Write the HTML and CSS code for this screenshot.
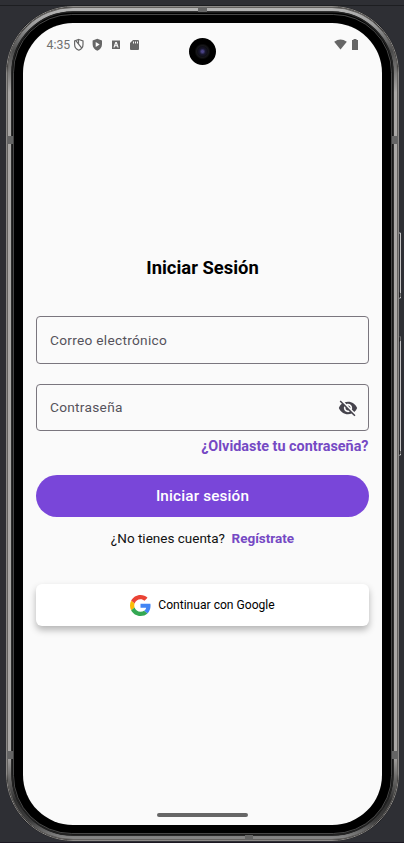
FILE: index.html
```
<!DOCTYPE html>
<html lang="es">
<head>
<meta charset="utf-8">
<title>Iniciar Sesión</title>
<link rel="stylesheet" href="styles.css">
</head>
<body>
<div class="device">
  <svg class="frame" width="404" height="843" viewBox="0 0 404 843" fill="none">
    <defs>
      <linearGradient id="metal" x1="0" y1="0" x2="0" y2="1">
        <stop offset="0" stop-color="#b4b4b4"/><stop offset=".018" stop-color="#9c9c9c"/>
        <stop offset=".05" stop-color="#4a4a4a"/><stop offset=".1" stop-color="#aaa8a6"/>
        <stop offset=".9" stop-color="#aaa8a6"/><stop offset=".955" stop-color="#303030"/><stop offset=".98" stop-color="#3c3c3c"/><stop offset="1" stop-color="#858585"/>
      </linearGradient>
    </defs>
    <path d="M0 5.500H404" stroke="#1d1e21"/>
    <path d="M0 842.500H404" stroke="#1c1822"/>
    <path d="M399 233H400.500V298H399M399 337H400.500V455H399" stroke="#c4c4c4"/>
    <path d="M398.500 293H400V297H398.500M398.500 337H400V341H398.500M398.500 451H400V454H398.500" stroke="#151515"/>
    <rect x="6" y="6" width="393" height="835" rx="67" fill="#000"/>
    <rect x="6.500" y="6.500" width="392" height="834" rx="66.500" stroke="#8b8987"/>
    <rect x="9.500" y="9.500" width="386" height="828" rx="63.500" stroke="url(#metal)" stroke-width="4"/>
    <rect x="7.500" y="7.500" width="390" height="832" rx="65.500" stroke="#63615f"/>
    <rect x="12" y="12" width="381" height="823" rx="61" stroke="#222" stroke-width="1.500"/>
    <rect x="13.500" y="14.500" width="378" height="819" rx="58" stroke="#777" stroke-width=".6"/>
    <path d="M7 136H13V144H7M392 136H398V144H392M7 751H13V759H7M392 751H398V759H392M198 7H207V12H198M245 835H253V840H245" fill="#656565"/>
  </svg>
  <main class="screen">
    <header class="status">
      <span class="clock">4:35</span>
      <svg class="left-icons" width="68" height="14" viewBox="0 0 68 14">
        <path d="M5.800 1.500 10 3V6.500C10 9.300 8.200 11.300 5.800 12.200 3.400 11.300 1.600 9.300 1.600 6.500V3ZM3 2.800 8.800 10.200M5.500 1.700V5.800" fill="none" stroke="#666" stroke-width="1.200"/>
        <path d="M24.300.800 29 2.600V6.300C29 9.400 27 11.800 24.300 12.800 21.600 11.800 19.600 9.400 19.600 6.300V2.600ZM22.700 4V9L26.700 6.500Z" fill="#666" fill-rule="evenodd"/>
        <path d="M39 2.500H47V11H39ZM42.300 4 40.400 9.500H41.600L42 8.300H44.100L44.500 9.500H45.700L43.800 4ZM43 5.400 43.700 7.300H42.400Z" fill="#666" fill-rule="evenodd"/>
        <path d="M60 2H65Q66 2 66 3V11Q66 12 65 12H58Q57 12 57 11V5ZM60 3.500V5.500H61V3.500ZM62 3.500V5.500H63V3.500ZM64 3.500V5.500H65V3.500Z" fill="#666" fill-rule="evenodd"/>
      </svg>
      <svg class="right-icons" width="26" height="14" viewBox="0 0 26 14">
        <path d="M.2 3.700Q6.500-.600 12.800 3.700L6.500 11.500Z" fill="#666"/>
        <path d="M19.500 2H18V12H24V2H22.500V1H19.500Z" fill="#666"/>
      </svg>
    </header>
    <h1>Iniciar Sesión</h1>
    <form class="login">
      <div class="field email"><span>Correo electrónico</span></div>
      <div class="field password"><span>Contraseña</span>
        <svg width="20" height="20" viewBox="0 0 24 24"><path fill="#45434c" d="M12 7c2.760 0 5 2.240 5 5 0 .65-.13 1.260-.36 1.830l2.920 2.920c1.510-1.260 2.700-2.890 3.430-4.750-1.730-4.390-6-7.500-11-7.500-1.400 0-2.740.25-3.980.7l2.160 2.160C10.740 7.130 11.350 7 12 7zM2 4.270l2.280 2.280.46.46C3.080 8.300 1.780 10.020 1 12c1.730 4.390 6 7.500 11 7.500 1.550 0 3.030-.3 4.380-.84l.42.42L19.730 22 21 20.730 3.270 3 2 4.270zM7.530 9.800l1.550 1.550c-.05.21-.08.43-.08.65 0 1.660 1.340 3 3 3 .22 0 .44-.03.65-.08l1.550 1.550c-.67.33-1.410.53-2.200.53-2.760 0-5-2.240-5-5 0-.79.2-1.530.53-2.200zm4.310-.78 3.150 3.150.02-.16c0-1.660-1.340-3-3-3l-.17.01z"/></svg>
      </div>
      <a class="forgot">¿Olvidaste tu contraseña?</a>
      <div class="submit"><span>Iniciar sesión</span></div>
      <p class="signup"><span>¿No tienes cuenta?</span><a>Regístrate</a></p>
      <div class="google">
        <svg width="21" height="21" viewBox="0 0 48 48"><path fill="#EA4335" d="M24 9.500c3.540 0 6.710 1.220 9.210 3.600l6.850-6.850C35.900 2.380 30.470 0 24 0 14.620 0 6.510 5.380 2.560 13.220l7.980 6.190C12.430 13.720 17.740 9.500 24 9.500z"/><path fill="#4285F4" d="M46.980 24.550c0-1.570-.15-3.090-.38-4.550H24v9.020h12.940c-.58 2.960-2.260 5.480-4.780 7.180l7.730 6c4.510-4.180 7.090-10.360 7.090-17.650z"/><path fill="#FBBC05" d="M10.530 28.590c-.48-1.450-.76-2.990-.76-4.590s.27-3.140.76-4.590l-7.980-6.190C.92 16.460 0 20.120 0 24c0 3.880.92 7.540 2.560 10.780l7.970-6.190z"/><path fill="#34A853" d="M24 48c6.480 0 11.930-2.130 15.890-5.810l-7.730-6c-2.150 1.450-4.920 2.300-8.160 2.300-6.260 0-11.570-4.220-13.470-9.910l-7.980 6.190C6.510 42.620 14.620 48 24 48z"/></svg>
        <span>Continuar con Google</span>
      </div>
    </form>
    <div class="home"></div>
  </main>
  <div class="camera"></div>
</div>
</body>
</html>
```
FILE: styles.css
```
* { box-sizing: border-box; }
body { margin: 0; background: #2e2f34; font-family: Roboto, sans-serif; overflow: hidden; }
.device { position: relative; width: 404px; height: 843px; padding: 23px 22px 18px 23px; }
.frame { position: absolute; left: 0; top: 0; }
.screen { position: relative; height: 802px; padding: 0 13px; border-radius: 50px; background: #fafafa; display: flex; flex-direction: column; }
.status { display: flex; height: 44px; padding: 15px 9px 0 10.5px; }
.clock { width: 26.5px; font-size: 12.3px; line-height: 14px; color: #707070; }
.left-icons { flex: none; }
.right-icons { margin-left: auto; }
h1 { margin: 188px 0 0; height: 24px; font-size: 18.4px; line-height: 25px; font-weight: 700; text-align: center; color: #000; }
.login { display: flex; flex-direction: column; margin-top: 37px; }
.field { display: flex; align-items: center; justify-content: space-between; height: 48px; padding: 0 10px 0 13px; border: 1px solid #7a767e; border-radius: 4px; color: #55525a; font-size: 13.7px; letter-spacing: .28px; }
.field span { margin-top: -1px; }
.password { height: 47px; margin-top: 20px; }
.forgot { align-self: flex-end; margin: 6px .5px 0 0; height: 20px; line-height: 20px; font-size: 14.4px; font-weight: 700; color: #7549c4; }
.submit { display: flex; align-items: center; justify-content: center; margin-top: 18px; height: 42px; border-radius: 21px; background: #7946d9; color: #fff; font-size: 15.3px; letter-spacing: .15px; font-weight: 500; }
.signup { display: flex; justify-content: center; gap: 6.5px; margin: 11px 0 0; height: 20px; line-height: 20px; font-size: 13.5px; color: #111; }
.signup a { font-weight: 700; color: #7549c4; }
.google { display: flex; align-items: center; justify-content: center; gap: 7px; margin-top: 36px; height: 42px; border-radius: 6px; background: #fff; box-shadow: 0 4px 7px rgba(0,0,0,.28); font-size: 12.1px; color: #000; }
.home { width: 91px; height: 4px; margin: auto auto 8px; border-radius: 2px; background: #666; }
.camera { position: absolute; left: 189px; top: 38px; width: 27px; height: 27px; border-radius: 50%; background: radial-gradient(circle, #4a4385 0 1px, #19172f 3px, #101018 5px, #17171a 6px, #000 8px); }
```
